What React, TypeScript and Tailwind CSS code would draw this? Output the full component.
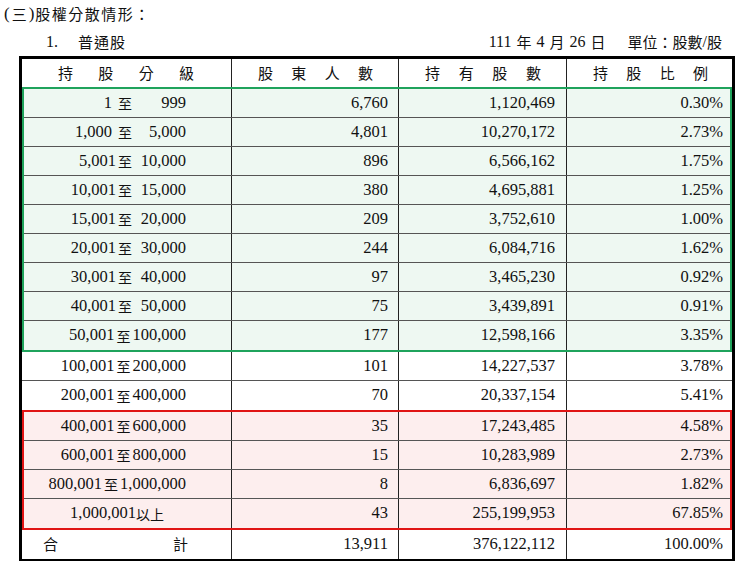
import React from "react";

const FONT = { fontFamily: '"Liberation Serif", "Noto Sans CJK TC", serif' };
const CJK = { fontFamily: '"Noto Sans CJK TC", "Liberation Serif", serif' };

type R = { l: string; r?: string; n: string; s: string; p: string; gap?: boolean };

const green: R[] = [
  { l: "1", r: "999", n: "6,760", s: "1,120,469", p: "0.30%", gap: true },
  { l: "1,000", r: "5,000", n: "4,801", s: "10,270,172", p: "2.73%", gap: true },
  { l: "5,001", r: "10,000", n: "896", s: "6,566,162", p: "1.75%" },
  { l: "10,001", r: "15,000", n: "380", s: "4,695,881", p: "1.25%" },
  { l: "15,001", r: "20,000", n: "209", s: "3,752,610", p: "1.00%" },
  { l: "20,001", r: "30,000", n: "244", s: "6,084,716", p: "1.62%" },
  { l: "30,001", r: "40,000", n: "97", s: "3,465,230", p: "0.92%" },
  { l: "40,001", r: "50,000", n: "75", s: "3,439,891", p: "0.91%" },
  { l: "50,001", r: "100,000", n: "177", s: "12,598,166", p: "3.35%" },
];
const white: R[] = [
  { l: "100,001", r: "200,000", n: "101", s: "14,227,537", p: "3.78%" },
  { l: "200,001", r: "400,000", n: "70", s: "20,337,154", p: "5.41%" },
];
const red: R[] = [
  { l: "400,001", r: "600,000", n: "35", s: "17,243,485", p: "4.58%" },
  { l: "600,001", r: "800,000", n: "15", s: "10,283,989", p: "2.73%" },
  { l: "800,001", r: "1,000,000", n: "8", s: "6,836,697", p: "1.82%" },
  { l: "1,000,001", n: "43", s: "255,199,953", p: "67.85%" },
];

function Row({ d, grouped, border }: { d: R; grouped: boolean; border: boolean }) {
  const grid = grouped
    ? "grid grid-cols-[208px_167px_168px_163px]"
    : "grid grid-cols-[210px_167px_168px_165px]";
  return (
    <div className={`${grid} h-[29px] ${border ? "border-b border-[#555]" : ""} text-[16.5px] text-[#111]`}>
      {d.r ? (
        <div className="flex items-center justify-end pr-[45px] border-r border-[#222] whitespace-nowrap">
          <span className={d.gap ? "pr-[4px]" : ""}>{d.l}</span>
          <span className="text-[14px] mx-[2px] leading-none" style={CJK}>至</span>
          <span className="min-w-[52px] text-right">{d.r}</span>
        </div>
      ) : (
        <div className="flex items-center justify-end pr-[67px] border-r border-[#222] whitespace-nowrap">
          <span>{d.l}</span>
          <span className="text-[14px] leading-none" style={CJK}>以上</span>
        </div>
      )}
      <div className="flex items-center justify-end pr-[10px] border-r border-[#222]">{d.n}</div>
      <div className="flex items-center justify-end pr-[11px] border-r border-[#222]">{d.s}</div>
      <div className={`flex items-center justify-end ${grouped ? "pr-[7px]" : "pr-[9px]"}`}>{d.p}</div>
    </div>
  );
}

function Spread({ chars, cls }: { chars: string[]; cls: string }) {
  return (
    <div className={`flex items-center justify-between ${cls}`}>
      {chars.map((c, i) => (
        <span key={i}>{c}</span>
      ))}
    </div>
  );
}

export default function App() {
  return (
    <div className="w-[740px] h-[561px] bg-white text-[#111] overflow-hidden" style={FONT}>
      <div className="h-[28px] flex items-center pl-[4px] text-[17px]">
        <span className="mr-[2px]">(</span>
        <span style={CJK} className="text-[15px]">三</span>
        <span className="ml-[2px] mr-[1px]">)</span>
        <span style={CJK} className="text-[15px] tracking-[1.5px]">股權分散情形：</span>
      </div>
      <div className="h-[28px] flex items-center text-[16px]">
        <span className="ml-[46px]">1.</span>
        <span className="ml-[20px] text-[15px] tracking-[1px]" style={CJK}>普通股</span>
        <div className="ml-auto mr-[18px] flex items-center">
          <span>111</span>
          <span className="ml-[5px] text-[15px]" style={CJK}>年</span>
          <span className="ml-[5px]">4</span>
          <span className="ml-[5px] text-[15px]" style={CJK}>月</span>
          <span className="ml-[5px]">26</span>
          <span className="ml-[5px] text-[15px]" style={CJK}>日</span>
          <span className="ml-[22px] text-[15px]" style={CJK}>單位：股數</span>
          <span>/</span>
          <span className="text-[15px]" style={CJK}>股</span>
        </div>
      </div>

      <div className="ml-[19px] w-[716px] border-[3px] border-black">
        <div className="grid grid-cols-[210px_167px_168px_165px] h-[28px] text-[15px]" style={CJK}>
          <div className="border-r border-[#222] pl-[36px] pr-[37px] flex">
            <Spread chars={["持", "股", "分", "級"]} cls="w-full" />
          </div>
          <div className="border-r border-[#222] pl-[26px] pr-[25px] flex">
            <Spread chars={["股", "東", "人", "數"]} cls="w-full" />
          </div>
          <div className="border-r border-[#222] pl-[26px] pr-[25px] flex">
            <Spread chars={["持", "有", "股", "數"]} cls="w-full" />
          </div>
          <div className="pl-[26px] pr-[24px] flex">
            <Spread chars={["持", "股", "比", "例"]} cls="w-full" />
          </div>
        </div>

        <div className="border-2 border-[#1fa35c] bg-[#eef8f2]">
          {green.map((d, i) => (
            <Row key={i} d={d} grouped border={i < green.length - 1} />
          ))}
        </div>

        <div>
          {white.map((d, i) => (
            <Row key={i} d={d} grouped={false} border={i < white.length - 1} />
          ))}
        </div>

        <div className="border-2 border-[#e01414] bg-[#fdeeee]">
          {red.map((d, i) => (
            <Row key={i} d={d} grouped border={i < red.length - 1} />
          ))}
        </div>

        <div className="grid grid-cols-[210px_167px_168px_165px] h-[29px] text-[16.5px]">
          <div className="border-r border-[#222] pl-[21px] pr-[43px] flex items-center justify-between text-[15px]" style={CJK}>
            <span>合</span>
            <span>計</span>
          </div>
          <div className="flex items-center justify-end pr-[10px] border-r border-[#222]">13,911</div>
          <div className="flex items-center justify-end pr-[11px] border-r border-[#222]">376,122,112</div>
          <div className="flex items-center justify-end pr-[9px]">100.00%</div>
        </div>
      </div>
    </div>
  );
}
